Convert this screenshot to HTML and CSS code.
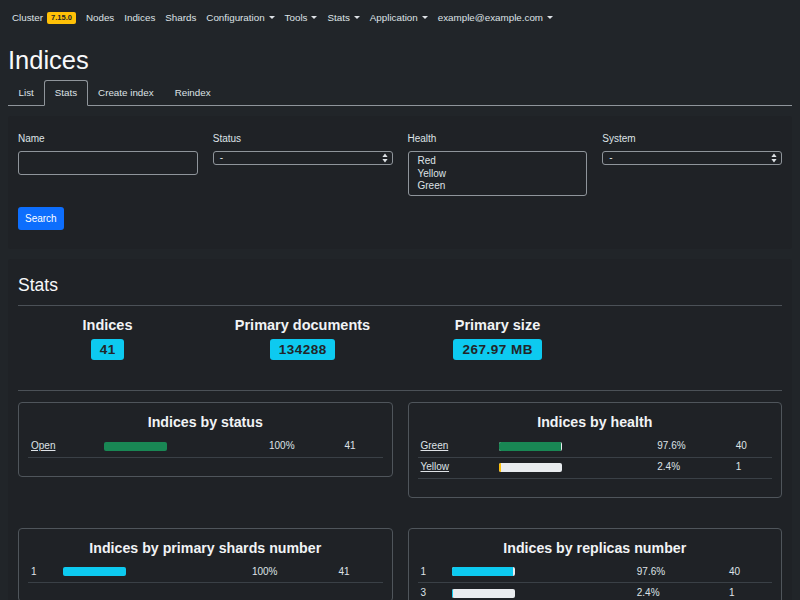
FILE: index.html
```html
<!DOCTYPE html>
<html lang="en">
<head>
<meta charset="utf-8">
<title>Indices</title>
<link rel="stylesheet" href="styles.css">
</head>
<body>
<nav class="navbar">
  <a class="brand">Cluster <span class="badge-version">7.15.0</span></a>
  <a class="nav-link">Nodes</a>
  <a class="nav-link">Indices</a>
  <a class="nav-link">Shards</a>
  <a class="nav-link dropdown">Configuration</a>
  <a class="nav-link dropdown">Tools</a>
  <a class="nav-link dropdown">Stats</a>
  <a class="nav-link dropdown">Application</a>
  <a class="nav-link dropdown">example@example.com</a>
</nav>

<main class="container">
  <h1 class="page-title">Indices</h1>
  <ul class="tabs">
    <li class="tab">List</li>
    <li class="tab active">Stats</li>
    <li class="tab">Create index</li>
    <li class="tab">Reindex</li>
  </ul>

  <section class="panel filters">
    <div class="filter-row">
      <div class="field">
        <label class="field-label">Name</label>
        <div class="input"></div>
      </div>
      <div class="field">
        <label class="field-label">Status</label>
        <div class="select">
          <span>-</span>
          <svg class="updown" width="6" height="10" viewBox="0 0 6 10"><path d="M3 0.5 L5.6 4 H0.4 Z M3 9.5 L5.6 6 H0.4 Z" fill="#dee2e6"/></svg>
        </div>
      </div>
      <div class="field">
        <label class="field-label">Health</label>
        <div class="multi">
          <div>Red</div>
          <div>Yellow</div>
          <div>Green</div>
        </div>
      </div>
      <div class="field">
        <label class="field-label">System</label>
        <div class="select">
          <span>-</span>
          <svg class="updown" width="6" height="10" viewBox="0 0 6 10"><path d="M3 0.5 L5.6 4 H0.4 Z M3 9.5 L5.6 6 H0.4 Z" fill="#dee2e6"/></svg>
        </div>
      </div>
    </div>
    <button class="btn-primary">Search</button>
  </section>

  <section class="panel stats">
    <h4 class="section-title">Stats</h4>
    <div class="summary-wrap">
      <div class="summary">
        <div class="summary-item">
          <div class="summary-label">Indices</div>
          <span class="badge-info">41</span>
        </div>
        <div class="summary-item">
          <div class="summary-label">Primary documents</div>
          <span class="badge-info">134288</span>
        </div>
        <div class="summary-item">
          <div class="summary-label">Primary size</div>
          <span class="badge-info">267.97 MB</span>
        </div>
        <div class="summary-item"></div>
      </div>
    </div>

    <div class="charts">
      <div class="chart-card">
        <h5 class="chart-title">Indices by status</h5>
        <table class="chart-table">
          <tr>
            <td><a class="link">Open</a></td>
            <td><div class="progress"><div class="bar bar-green" style="width:100%"></div></div></td>
            <td>100%</td>
            <td>41</td>
          </tr>
        </table>
      </div>
      <div class="chart-card">
        <h5 class="chart-title">Indices by health</h5>
        <table class="chart-table">
          <tr>
            <td><a class="link">Green</a></td>
            <td><div class="progress"><div class="bar bar-green" style="width:97.6%"></div></div></td>
            <td>97.6%</td>
            <td>40</td>
          </tr>
          <tr>
            <td><a class="link">Yellow</a></td>
            <td><div class="progress"><div class="bar bar-yellow" style="width:2.4%"></div></div></td>
            <td>2.4%</td>
            <td>1</td>
          </tr>
        </table>
      </div>
      <div class="chart-card">
        <h5 class="chart-title">Indices by primary shards number</h5>
        <table class="chart-table">
          <tr>
            <td>1</td>
            <td><div class="progress"><div class="bar bar-cyan" style="width:100%"></div></div></td>
            <td>100%</td>
            <td>41</td>
          </tr>
        </table>
      </div>
      <div class="chart-card">
        <h5 class="chart-title">Indices by replicas number</h5>
        <table class="chart-table">
          <tr>
            <td>1</td>
            <td><div class="progress"><div class="bar bar-cyan" style="width:97.6%"></div></div></td>
            <td>97.6%</td>
            <td>40</td>
          </tr>
          <tr>
            <td>3</td>
            <td><div class="progress"><div class="bar bar-cyan" style="width:2.4%"></div></div></td>
            <td>2.4%</td>
            <td>1</td>
          </tr>
        </table>
      </div>
    </div>
  </section>
</main>
</body>
</html>
```

FILE: styles.css
```css
* { box-sizing: border-box; }
html, body { margin: 0; padding: 0; }
body {
  background: #212529;
  color: #dee2e6;
  font-family: "Liberation Sans", Arial, sans-serif;
  font-size: 10px;
  line-height: 1.25;
}

.navbar {
  display: flex;
  align-items: center;
  height: 35px;
  padding: 1px 7px 0;
}
.brand, .nav-link {
  color: #dee2e6;
  text-decoration: none;
  padding: 0 5px;
  font-size: 9.8px;
  white-space: nowrap;
}
.brand { display: flex; align-items: center; }
.badge-version {
  display: inline-block;
  margin-left: 4px;
  background: #ffc107;
  color: #212529;
  font-weight: bold;
  font-size: 7.5px;
  line-height: 12px;
  padding: 0 4px;
  border-radius: 2px;
}
.nav-link.dropdown::after {
  content: "";
  display: inline-block;
  margin-left: 4px;
  vertical-align: 2px;
  border-top: 3.5px solid #dee2e6;
  border-left: 3px solid transparent;
  border-right: 3px solid transparent;
}

.container { padding: 0 8px; }

.page-title {
  margin: 9px 0 0;
  font-size: 25.5px;
  font-weight: 500;
  line-height: 32px;
  color: #f8f9fa;
}

.tabs {
  display: flex;
  list-style: none;
  margin: 4px 0 0;
  padding: 0;
  border-bottom: 1px solid #8f959b;
  height: 26px;
}
.tab {
  padding: 0 9.5px;
  line-height: 24px;
  margin-bottom: -1px;
  border: 1px solid transparent;
  border-radius: 3px 3px 0 0;
  color: #dee2e6;
  font-size: 9.8px;
}
.tab.active {
  border-color: #8f959b #8f959b #212529;
  background: #212529;
}

.panel {
  background: #1f2226;
  border-radius: 3px;
}

.filters {
  margin-top: 10px;
  padding: 17px 10px 19px;
}
.filter-row {
  display: grid;
  grid-template-columns: repeat(4, 1fr);
  column-gap: 15px;
  align-items: start;
}
.field-label {
  display: block;
  font-size: 10px;
  line-height: 12px;
  margin-bottom: 6px;
  color: #dee2e6;
}
.input {
  height: 24px;
  border: 1px solid #8f959b;
  border-radius: 3px;
}
.select {
  height: 14px;
  border: 1px solid #8f959b;
  border-radius: 3px;
  display: flex;
  align-items: center;
  justify-content: space-between;
  padding: 0 4px 0 6px;
  font-size: 10px;
}
.updown { display: block; }
.multi {
  height: 45px;
  border: 1px solid #8f959b;
  border-radius: 3px;
  padding: 3px 9px;
  font-size: 10px;
  line-height: 12.5px;
}
.btn-primary {
  margin-top: 11px;
  background: #0d6efd;
  border: none;
  border-radius: 3px;
  color: #fff;
  font-family: inherit;
  font-size: 10px;
  height: 23px;
  padding: 0 7px;
}

.stats {
  margin-top: 10px;
  padding: 15px 10px 10px;
}
.section-title {
  margin: 0;
  font-size: 17.5px;
  font-weight: 500;
  line-height: 22px;
  padding-bottom: 9px;
  border-bottom: 1px solid #4b5157;
  color: #f8f9fa;
}
.summary-wrap {
  padding: 10px 0 30px;
  border-bottom: 1px solid #4b5157;
}
.summary {
  display: grid;
  grid-template-columns: repeat(4, 1fr);
  margin: 0 -8px;
}
.summary-item {
  text-align: center;
}
.summary-label {
  font-size: 14.5px;
  font-weight: bold;
  line-height: 18px;
  color: #f1f3f5;
  margin-bottom: 5px;
}
.badge-info {
  display: inline-block;
  background: #0dcaf0;
  color: #212529;
  font-weight: bold;
  font-size: 13.5px;
  letter-spacing: 0.5px;
  line-height: 21px;
  padding: 0 8.5px 0 9px;
  border-radius: 3px;
}

.charts {
  display: grid;
  grid-template-columns: 1fr 1fr;
  column-gap: 15px;
  row-gap: 30px;
  align-items: start;
  margin-top: 11px;
}
.chart-card {
  border: 1px solid #4f555b;
  border-radius: 4px;
  padding: 10px 9px 18px;
}
.chart-title {
  margin: 0 0 5px;
  text-align: center;
  font-size: 14.2px;
  font-weight: bold;
  line-height: 18px;
  color: #f1f3f5;
}
.chart-table {
  width: 100%;
  border-collapse: collapse;
  font-size: 10px;
}
.chart-table td {
  padding: 0 3px;
  height: 21px;
  border-bottom: 1px solid #3a4046;
  vertical-align: middle;
  color: #dee2e6;
}
.link {
  color: #dee2e6;
  text-decoration: underline;
}
.progress {
  width: 63px;
  height: 9px;
  background: #e9ecef;
  border-radius: 2px;
  overflow: hidden;
}
.bar { height: 100%; }
.bar-green { background: #198754; }
.bar-yellow { background: #ffc107; }
.bar-cyan { background: #0dcaf0; }
```
